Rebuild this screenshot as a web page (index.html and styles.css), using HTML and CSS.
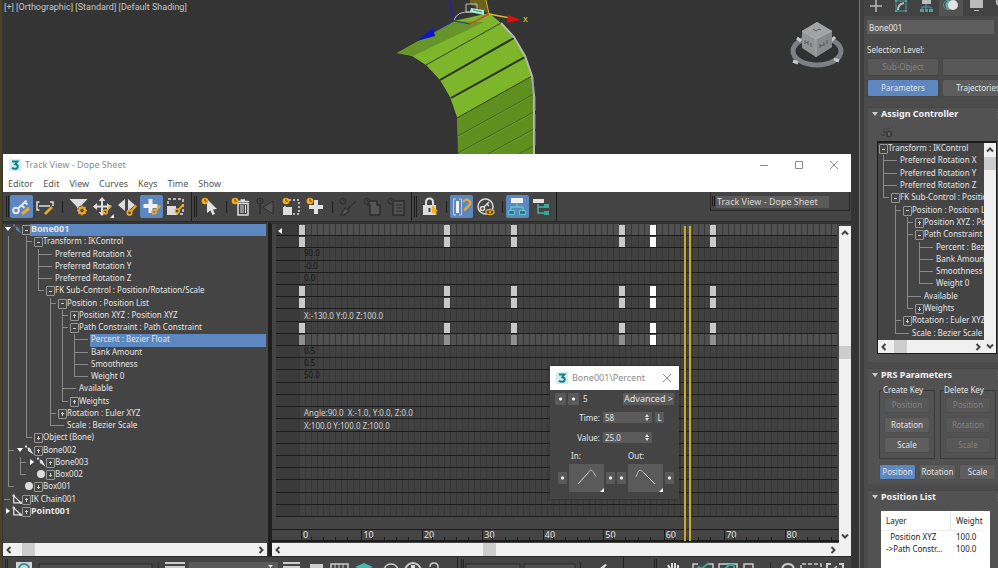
FILE: index.html
```html
<!DOCTYPE html>
<html lang="en">
<head>
<meta charset="utf-8">
<title>Track View - Dope Sheet</title>
<link rel="stylesheet" href="styles.css">
</head>
<body>
<svg class="defs" aria-hidden="true">
  <defs>
    <symbol id="logo" viewBox="0 0 12 12"><rect width="12" height="12" fill="#d5eef0"/><path d="M3 2.500h5.500L6.300 5.200c1.700 .2 2.500 1.100 2.500 2.200 0 1.500-1.300 2.400-3 2.400-1.200 0-2.200-.4-2.900-1" fill="none" stroke="#14808a" stroke-width="1.900"/></symbol>
    <symbol id="goldkey" viewBox="0 0 10 10"><path d="M9.300 .5 4.500 5.800" stroke="#f0a822" stroke-width="2"/><circle cx="3.200" cy="7" r="2" fill="none" stroke="#f0a822" stroke-width="1.600"/></symbol>
    <symbol id="clock" viewBox="0 0 8 8"><circle cx="4" cy="4" r="3.300" fill="#f5ae1d"/><path d="M4 1.500V4.300H6" stroke="#6a4a0c" fill="none"/></symbol>
    <symbol id="clockoff" viewBox="0 0 8 8"><circle cx="4" cy="4" r="3" fill="#444" stroke="#2c2c2c"/><path d="M4 2V4.200H6" stroke="#2c2c2c" fill="none"/></symbol>
    <symbol id="keys" viewBox="0 0 22 22"><circle cx="6" cy="14.500" r="2.800" fill="none" stroke="#e6e6e6" stroke-width="2"/><path d="M8 12.500 16.500 4.500M11.500 9l3 3M14.500 6l3 2.500" stroke="#e6e6e6" stroke-width="2"/><path d="M12 18l7-6" stroke="#f0a822" stroke-width="3"/></symbol>
    <symbol id="ranges" viewBox="0 0 22 22"><path d="M5.500 6H3v8h2.500M16 6h3v4M5 10h11" fill="none" stroke="#ddd" stroke-width="1.500"/><path d="M11 18l7-7" stroke="#f0a822" stroke-width="2.500"/></symbol>
    <symbol id="filter" viewBox="0 0 22 22"><path d="M1.500 3h18L12 11v7l-3-3v-4z" fill="#ddd"/><circle cx="14" cy="14.500" r="5" fill="#444"/><circle cx="14" cy="14.500" r="3" fill="none" stroke="#f0a822" stroke-width="2"/><path d="M14 9.500v10M9 14.500h10M10.500 11l7 7M17.500 11l-7 7" stroke="#f0a822" stroke-width="1.300"/><circle cx="14" cy="14.500" r="1.700" fill="#444"/></symbol>
    <symbol id="move" viewBox="0 0 22 22"><path d="M10 3v16M2 10.500h16" stroke="#ddd" stroke-width="2"/><path d="M10 1l3.500 4h-7zM10 20l3.500-4h-7zM1 10.500l4-3.500v7zM19 10.500l-4-3.500v7z" fill="#ddd"/><use href="#goldkey" x="10" y="9" width="10" height="10"/><path d="M22 18v4h-4z" fill="#fff"/></symbol>
    <symbol id="slide" viewBox="0 0 22 22"><path d="M9 3v12L2 9zM12 3v12l7-6z" fill="#ddd"/><use href="#goldkey" x="10" y="9" width="11" height="11"/></symbol>
    <symbol id="add" viewBox="0 0 22 22"><path d="M10.500 3v14M3.500 10h14" stroke="#f0f0f0" stroke-width="4"/><use href="#goldkey" x="11" y="9" width="10" height="10"/></symbol>
    <symbol id="scale" viewBox="0 0 22 22"><rect x="4" y="3" width="15" height="15" fill="none" stroke="#ddd" stroke-width="1.500" stroke-dasharray="3 2"/><path d="M3 10h9v9H3z" fill="#ddd"/><use href="#goldkey" x="10" y="8" width="10" height="10"/></symbol>
    <symbol id="select" viewBox="0 0 22 22"><path d="M8 3l10 10-4 .5 2 4.500-2.500 1-2-4.500L8 17z" fill="#e2e2e2"/><use href="#clock" x="2" y="1" width="8" height="8"/></symbol>
    <symbol id="trash" viewBox="0 0 22 22"><path d="M7 5.500h12M10.500 4h4.500" stroke="#ddd" stroke-width="1.500"/><path d="M8 7.500h10V19H8z" fill="none" stroke="#ddd" stroke-width="1.500"/><path d="M11 9v8M13 9v8M15.500 9v8" stroke="#ddd"/><use href="#clock" x="1" y="1" width="8" height="8"/></symbol>
    <symbol id="rev" viewBox="0 0 22 22"><path d="M5 5v13" stroke="#2c2c2c" stroke-width="1.500"/><path d="M18 5v13L8 11.500z" fill="#555" stroke="#2c2c2c"/><use href="#clockoff" x="1" y="1" width="8" height="8"/></symbol>
    <symbol id="scaletime" viewBox="0 0 22 22"><rect x="5" y="4" width="14" height="14" fill="none" stroke="#ddd" stroke-width="1.500" stroke-dasharray="2 2"/><path d="M3 11h9v8H3z" fill="#ddd"/><use href="#clock" x="2" y="1" width="8" height="8"/></symbol>
    <symbol id="addtime" viewBox="0 0 22 22"><path d="M11 4v14M4 11h14" stroke="#e2e2e2" stroke-width="4"/><use href="#clock" x="1" y="1" width="8" height="8"/></symbol>
    <symbol id="cut" viewBox="0 0 22 22"><path d="M20 5l-8 8M9 12l4 3-5 4H5z" fill="#5c5c5c" stroke="#303030" stroke-width="1.500"/><use href="#clockoff" x="3" y="1" width="8" height="8"/></symbol>
    <symbol id="copy" viewBox="0 0 22 22"><path d="M8 5h8v4h3v10H9V9H6" fill="#555" stroke="#2c2c2c" stroke-width="1.500"/><use href="#clockoff" x="2" y="1" width="8" height="8"/></symbol>
    <symbol id="paste" viewBox="0 0 22 22"><path d="M7 5h11v14H7z" fill="#505050" stroke="#2c2c2c" stroke-width="1.500"/><path d="M10 9h6M10 12h6M10 15h6" stroke="#2c2c2c"/><use href="#clockoff" x="1" y="1" width="8" height="8"/></symbol>
    <symbol id="lock" viewBox="0 0 22 22"><path d="M7 10V6q0-3.500 3.500-3.500T14 6v4" fill="none" stroke="#ddd" stroke-width="2"/><path d="M4 9h13v10H4z" fill="#ddd"/><path d="M9.500 12h2v4h-2z" fill="#444"/><path d="M13 9l6 6-2 .5 1 3-2 .5-1-3-2 2z" fill="#f5ae1d"/></symbol>
    <symbol id="snap" viewBox="0 0 22 22"><path d="M6 3H3.500v16H6M9 3h2.500v16H9" fill="none" stroke="#ccc"/><path d="M6 5h3v12H6z" fill="#f2f2f2"/><path d="M13 6q3-4 6-1.500t0 5l-5 5" fill="none" stroke="#dfa43a" stroke-width="2.500"/></symbol>
    <symbol id="keyview" viewBox="0 0 22 22"><circle cx="10.500" cy="10.500" r="7.500" fill="none" stroke="#ddd" stroke-width="1.500"/><circle cx="7.500" cy="12.500" r="2" fill="none" stroke="#ddd" stroke-width="1.500"/><path d="M9 11l5-5M12 8l2 2" stroke="#ddd" stroke-width="1.500"/><ellipse cx="15" cy="16" rx="4" ry="2.500" fill="#444" stroke="#f0a822" stroke-width="1.300"/><circle cx="15" cy="16" r="1.200" fill="#f0a822"/></symbol>
    <symbol id="hier" viewBox="0 0 22 22"><path d="M5 2h12v5H5z" fill="#f0f0f0"/><path d="M11 7v4M5 14v-3h12v3" stroke="#5cc8c8" fill="none" stroke-width="1.300"/><path d="M2.500 14.500h6v4h-6zM13.500 14.500h6v4h-6z" fill="#2f7788" stroke="#60c8c8"/></symbol>
    <symbol id="hier2" viewBox="0 0 22 22"><path d="M2 3h11v4H2z" fill="#e0e0e0"/><path d="M7 8v9h7M7 11h7" stroke="#40b0a0" fill="none" stroke-width="1.500"/><path d="M13 8h5v4h-5zM13 15h5v4h-5z" fill="#3ba695"/></symbol>
    <symbol id="bone" viewBox="0 0 10 10"><path d="M1 0.500h2v2H1z"/><path d="M3.500 2.500 6 3l3.500 6.500L4 6z"/></symbol>
    <symbol id="chain" viewBox="0 0 12 12"><path d="M2 2v8.500h8.500z" fill="none" stroke="#ddd" stroke-width="1.500"/><circle cx="2" cy="2" r="1.500" fill="#ddd"/><circle cx="10.500" cy="10.500" r="1.500" fill="#ddd"/></symbol>
  </defs>
</svg>
<div class="app">
  <main class="viewport">
    <p class="vp-label">[+] [Orthographic] [Standard] [Default Shading]</p>
    <svg class="scene" viewBox="0 0 857 154" preserveAspectRatio="xMidYMin meet" aria-hidden="true">
      <g transform="translate(-2 0)">
        <path d="M397 53 454 21 489 13 501 23 514 37 525 56 532 76 534 95V154H458V136L457 117 450 97 440 80 426 65 412 56z" fill="#7db52b"/>
        <path d="M397 53 454 21 484 22 413 56z" fill="#67952a"/>
        <path d="M457 118 532 76 534 95V154H458z" fill="#5f901f"/>
        <path d="M426 65 501 23M457 118 532 76" stroke="#33431f" stroke-width="1"/>
        <path d="M440 80 514 38M451 98 525 57" stroke="#263217" stroke-width="2"/>
        <path d="M458 136 534 94M458 153 534 112M488 154 534 129M518 154 534 146" stroke="#42651c"/>
        <path d="M458 137 534 95M460 153 534 113M490 154 534 130" stroke="#79a044" stroke-width="1" opacity=".6"/>
        <path d="M501 23 514 37 525 56 532 76 534 95V154" fill="none" stroke="#b6b9b2" stroke-width="2"/>
        <path d="M533 77v17M535 96v15M535 114v15M535 131v14" stroke="#8d8e94" stroke-width="1"/>
        <path d="M470 0h16l2 13-18-9z" fill="#6c611d"/>
        <path d="M486 0l3 14" stroke="#c9bc2e"/>
        <path d="M449 0l5 20" stroke="#2322a8" stroke-width="1.500"/>
        <path d="M454 21 470 24" stroke="#23358e"/><path d="M470 24 489 14" stroke="#c3502a" stroke-width="1.500"/>
        <path d="M454 20q3-9 17-8M466 12V4h11v8z" fill="none" stroke="#bfc3bd"/>
        <path d="M471 8l13 2v5l-14-3z" fill="#a9efd2"/>
        <path d="M473 10l9 2" stroke="#3c8d78"/>
        <path d="M454 21 434 32" stroke="#1c2da0"/><path d="M433 28 435 36 417 41z" fill="#0d16c8"/>
        <path d="M489 14 510 18" stroke="#d8bb2c" stroke-width="1.500"/><path d="M508 15l13 5-14 3z" fill="#d50f0a"/>
        <text x="523" y="22" class="axis">x</text>
        <ellipse cx="817" cy="51" rx="24" ry="14" fill="#2f3032" stroke="#7c7f84" stroke-width="5"/>
        <path d="M797 38l4 3M835 37l-4 4M793 61l5 2M839 61l-5-2" stroke="#c5c7ca" stroke-width="3"/>
        <path d="M817 22 832 31V47L816 57 802 48V31z" fill="#929395"/>
        <path d="M817 22 832 31 816 39 802 31z" fill="#a2a3a5"/>
        <path d="M832 31V47L816 57V39z" fill="#88898b"/>
        <path d="M802 31l14 8 16-8M816 39v18" fill="none" stroke="#b5b6b8" stroke-width=".7"/>
        <path d="M813 29l3 2 3-2 2 1M805 40v4M808 41v4M811 43v4M820 44v4M824 42v4M827 40v4M805 42l3 1M820 46l4-1" stroke="#5a5b5e" fill="none"/>
      </g>
    </svg>

    <section class="window" aria-label="Track View - Dope Sheet">
      <header class="titlebar">
        <svg class="logo"><use href="#logo"/></svg>
        <h1>Track View - Dope Sheet</h1>
        <button class="sys" aria-label="Minimize"><svg viewBox="0 0 10 10"><path d="M1 5.500h8"/></svg></button>
        <button class="sys" aria-label="Maximize"><svg viewBox="0 0 10 10"><path d="M1.500 1.500h7v7h-7z"/></svg></button>
        <button class="sys" aria-label="Close"><svg viewBox="0 0 10 10"><path d="M1 1l8 8M9 1l-8 8"/></svg></button>
      </header>
      <nav class="menubar">
        <button>Editor</button><button>Edit</button><button>View</button><button>Curves</button><button>Keys</button><button>Time</button><button>Show</button>
      </nav>
      <div class="toolbar">
        <div class="tools tight">
          <i class="grip"></i>
          <button class="tool on" aria-label="Edit Keys"><svg><use href="#keys"/></svg></button>
          <button class="tool" aria-label="Edit Ranges"><svg><use href="#ranges"/></svg></button>
          <i class="sep"></i>
          <button class="tool" aria-label="Filters"><svg><use href="#filter"/></svg></button>
          <button class="tool" aria-label="Move Keys"><svg><use href="#move"/></svg></button>
          <button class="tool" aria-label="Slide Keys"><svg><use href="#slide"/></svg></button>
          <button class="tool on" aria-label="Add Keys"><svg><use href="#add"/></svg></button>
          <button class="tool" aria-label="Scale Keys"><svg><use href="#scale"/></svg></button>
        </div>
        <div class="tools">
          <i class="grip"></i>
          <button class="tool" aria-label="Select Time"><svg><use href="#select"/></svg></button>
          <i class="sep"></i>
          <button class="tool" aria-label="Delete Time"><svg><use href="#trash"/></svg></button>
          <button class="tool" aria-label="Reverse Time" disabled><svg><use href="#rev"/></svg></button>
          <button class="tool" aria-label="Scale Time"><svg><use href="#scaletime"/></svg></button>
          <button class="tool" aria-label="Insert Time"><svg><use href="#addtime"/></svg></button>
          <i class="sep"></i>
          <button class="tool" aria-label="Cut Time" disabled><svg><use href="#cut"/></svg></button>
          <button class="tool" aria-label="Copy Time" disabled><svg><use href="#copy"/></svg></button>
          <button class="tool" aria-label="Paste Time" disabled><svg><use href="#paste"/></svg></button>
        </div>
        <div class="tools">
          <i class="grip"></i>
          <button class="tool" aria-label="Lock Selection"><svg><use href="#lock"/></svg></button>
          <i class="sep"></i>
          <button class="tool on" aria-label="Snap Frames"><svg><use href="#snap"/></svg></button>
          <button class="tool" aria-label="Show Keyable Icons"><svg><use href="#keyview"/></svg></button>
          <i class="sep"></i>
          <button class="tool on" aria-label="Modify Subtree"><svg><use href="#hier"/></svg></button>
          <button class="tool" aria-label="Modify Child Keys"><svg><use href="#hier2"/></svg></button>
        </div>
        <div class="namebox"><i class="grip"></i><input aria-label="Track view name" value="Track View - Dope Sheet"></div>
      </div>

      <div class="panes">
        <div class="tree-pane">
          <div class="tree" id="tree"></div>
          <div class="hscroll"><svg viewBox="0 0 6 8"><path d="M4.500 1 1.500 4l3 3"/></svg><i class="thumb"></i><svg viewBox="0 0 6 8"><path d="M1.500 1l3 3-3 3"/></svg></div>
        </div>
        <div class="dope-pane">
          <div class="dope-body">
            <div class="dope">
              <div class="tracks" id="tracks"></div>
              <div class="ruler" id="ruler"></div>
              <div class="playhead"><i></i></div>
            </div>
            <div class="vscroll"><svg viewBox="0 0 8 6"><path d="M1 4.500l3-3 3 3"/></svg><i class="thumb"></i><svg viewBox="0 0 8 6"><path d="M1 1.500l3 3 3-3"/></svg></div>
          </div>
          <div class="hscroll wide"><svg viewBox="0 0 6 8"><path d="M4.500 1 1.500 4l3 3"/></svg><i class="thumb"></i><svg viewBox="0 0 6 8"><path d="M1.500 1l3 3-3 3"/></svg></div>
        </div>
      </div>

      <div class="statusbar">
        <svg viewBox="0 0 848 12" preserveAspectRatio="xMinYMin slice" aria-hidden="true">
          <path d="M2.500 2v10M4.500 2v10M458.500 2v10M460.500 2v10M651.500 2v10M653.500 2v10" stroke="#222"/>
          <path d="M13 5h16v7H13z" fill="#d0d4d4"/><circle cx="21" cy="12" r="5" fill="none" stroke="#2b8f94" stroke-width="2"/>
          <path d="M36 7h113v5H36zM463 7h54v5h-54zM521 7h51v5h-51z" fill="#505050" stroke="#2a2a2a"/>
          <path d="M162 6h20M162 10h20M280 6h17M280 10h17" stroke="#ccc" stroke-width="2"/>
          <path d="M186 5h89v7h-89z" fill="#5a5a5a"/><path d="M265 8h5l-2.500 3z" fill="#ddd"/>
          <path d="M307 7h13v5h-13z" fill="#ccc"/><path d="M328 7h17v5h-17z" fill="none" stroke="#ccc" stroke-width="1.500"/><path d="M332 7v5M336 7v5M340 7v5" stroke="#ccc"/>
          <path d="M361 6l9 4-5 2h-8l-5-2z" fill="#4bb4b4"/>
          <path d="M381 12q2-5 7-5t7 5M427 10q0-4 4-4t4 4v2" fill="none" stroke="#ccc" stroke-width="1.500"/>
          <path d="M402 12q3-6 8-6t8 6" fill="none" stroke="#ccc" stroke-width="2"/><path d="M408 8h4v4h-4zM596 12l6-5 2 1-4 4z" fill="#ddd"/>
          <path d="M454.500 0v12M620.500 0v12" stroke="#222"/><path d="M155.500 5v7M577.500 5v7M767.500 5v7" stroke="#2a2a2a"/>
          <path d="M665 8l2 4M669 6v6M672 6v6M675 8v4" stroke="#ddd" stroke-width="2"/>
          <path d="M690 12V7h5M705 7h5v5M716 12V7h18v5M741 12V7h9v5" fill="none" stroke="#ccc" stroke-width="1.500"/><path d="M694 12l2-2 2 2 8-6M722 12l4-4h5v4" fill="none" stroke="#3ca59a" stroke-width="2"/>
          <path d="M779 12q1-5 6-5t6 5M824 12V7h4M836 7h4v5" fill="none" stroke="#ccc" stroke-width="2"/><path d="M798 12V7h20v5M831 12l3-3" fill="none" stroke="#ccc" stroke-width="1.500" stroke-dasharray="4 2"/>
        </svg>
      </div>
    </section>

    <section class="keyinfo" aria-label="Bone001\Percent">
      <header><svg class="logo"><use href="#logo"/></svg><h2>Bone001\Percent</h2><button class="sys" aria-label="Close"><svg viewBox="0 0 10 10"><path d="M1 1l8 8M9 1l-8 8"/></svg></button></header>
      <div class="ki-body">
        <div class="ki-row"><button class="dot" aria-label="Previous key"></button><button class="dot" aria-label="Next key"></button><output>5</output><button class="adv">Advanced &gt;</button></div>
        <div class="ki-form">
          <label for="ktime">Time:</label><span class="spin"><input id="ktime" value="58"><i></i></span><button class="mini">L</button>
          <label for="kval">Value:</label><span class="spin"><input id="kval" value="25.0"><i></i></span>
        </div>
        <div class="ki-tan"><span>In:</span><span>Out:</span></div>
        <div class="ki-curves">
          <button class="dot" aria-label="Previous in tangent"></button>
          <button class="curve" aria-label="In tangent"><svg viewBox="0 0 35 28"><path d="M9 20 19 9"/><path d="M19 9q3-5 5-1.500l3 5" opacity=".7"/><path class="corner" d="M35 24v4h-4z"/></svg></button>
          <button class="dot" aria-label="Next in tangent"></button>
          <button class="dot" aria-label="Previous out tangent"></button>
          <button class="curve" aria-label="Out tangent"><svg viewBox="0 0 35 28"><path d="M16 9 27 20"/><path d="M8 13l2-5q2-4 6 1" opacity=".7"/><path class="corner" d="M35 24v4h-4z"/></svg></button>
          <button class="dot" aria-label="Next out tangent"></button>
        </div>
      </div>
    </section>
  </main>

  <aside class="command">
    <div class="cmd">
      <div class="tabs">
        <button aria-label="Create"><svg viewBox="0 0 16 14"><path d="M8 0v12M2 6h12" stroke="#bbb" stroke-width="1.500"/></svg></button>
        <button aria-label="Modify"><svg viewBox="0 0 16 14"><path d="M3 1h10v10H3z" fill="none" stroke="#4d9d9c"/><path d="M5 10q0-6 6-7" fill="none" stroke="#bbb" stroke-width="2"/><path d="M2 0h2v2H2zM12 0h2v2h-2zM2 10h2v2H2zM12 10h2v2h-2z" fill="#4d9d9c"/></svg></button>
        <button aria-label="Hierarchy"><svg viewBox="0 0 16 14"><path d="M4 0h9v4H4z" fill="#bbb"/><path d="M8 4v7M4 9V7h9v2" fill="none" stroke="#4d9d9c"/><path d="M2 9h4v3H2zM7 9h3v3H7zM11 9h4v3h-4z" fill="#4d9d9c"/></svg></button>
        <button class="cur" aria-label="Motion"><svg viewBox="0 0 16 14"><circle cx="5" cy="5" r="4.500" fill="none" stroke="#4d9d9c"/><circle cx="7" cy="5" r="4.500" fill="#68aaa8"/><circle cx="10" cy="5" r="5" fill="#e3e3e3"/></svg></button>
        <button aria-label="Display"><svg viewBox="0 0 16 14"><path d="M2 0h13v8H2zM6 10h5v1H6z" fill="#bbb"/></svg></button>
        <button aria-label="Utilities"><svg viewBox="0 0 16 14"><path d="M4 0q-1 5 3 5l6 7" fill="none" stroke="#bbb" stroke-width="2"/></svg></button>
      </div>
      <input class="objname" aria-label="Object name" value="Bone001">
      <p class="sel-label">Selection Level:</p>
      <div class="pair"><button class="btn" disabled>Sub-Object</button><button class="btn" aria-label="Sub-object level" disabled></button></div>
      <div class="pair"><button class="btn blue">Parameters</button><button class="btn">Trajectories</button></div>

      <section class="rollout">
        <h3>Assign Controller</h3>
        <svg class="assign" viewBox="0 0 14 14" aria-hidden="true"><path d="M1 10h4M3 7h3" stroke="#333"/><circle cx="9" cy="9" r="3.500" fill="#3b3b3b"/><path d="M8 9h2M9 7v4" stroke="#777"/><path d="M3 4h7l3-3" fill="none" stroke="#444"/></svg>
        <div class="ctrl-box">
          <div class="ctrl-main"><div class="tree" id="ctrl"></div>
            <div class="hscroll"><svg viewBox="0 0 6 8"><path d="M4.500 1 1.500 4l3 3"/></svg><i class="thumb"></i><svg viewBox="0 0 6 8"><path d="M1.500 1l3 3-3 3"/></svg></div></div>
          <div class="vscroll"><svg viewBox="0 0 8 6"><path d="M1 4.500l3-3 3 3"/></svg><i class="thumb"></i><svg viewBox="0 0 8 6"><path d="M1 1.500l3 3 3-3"/></svg></div>
        </div>
      </section>

      <section class="rollout">
        <h3>PRS Parameters</h3>
        <div class="groups">
          <fieldset><legend>Create Key</legend><button class="btn" disabled>Position</button><button class="btn">Rotation</button><button class="btn">Scale</button></fieldset>
          <fieldset><legend>Delete Key</legend><button class="btn" disabled>Position</button><button class="btn" disabled>Rotation</button><button class="btn" disabled>Scale</button></fieldset>
        </div>
        <div class="prs"><button class="btn blue">Position</button><button class="btn">Rotation</button><button class="btn">Scale</button></div>
      </section>

      <section class="rollout last">
        <h3>Position List</h3>
        <table class="layers">
          <thead><tr><th>Layer</th><th>Weight</th></tr></thead>
          <tbody><tr><td>&nbsp; Position XYZ</td><td>100.0</td></tr><tr><td>-&gt;Path Constr...</td><td>100.0</td></tr></tbody>
        </table>
      </section>
    </div>
  </aside>
</div>
<script src="app.js"></script>
</body>
</html>
```
FILE: styles.css
```css
* { box-sizing: border-box; }
html, body { height: 100%; margin: 0; }
body { background: #343434; color: #e4e4e4; font: 8px/12px "Noto Sans", "Open Sans", sans-serif; overflow: hidden; }
button, input { font: inherit; color: inherit; border: 0; margin: 0; padding: 0; background: none; }
h1, h2, h3, p { margin: 0; font-size: inherit; font-weight: 400; }
svg { display: block; }
i { display: block; }
.defs { position: absolute; width: 0; height: 0; }

.app { display: flex; height: 100%; min-height: 568px; }

/* Viewport */
.viewport { position: relative; flex: 1; min-width: 0; display: flex; flex-direction: column; border-left: 2px solid #4b421f; border-right: 1px solid #8e7518; }
.vp-label { position: absolute; left: 2px; top: 1px; font: 9px/12px Roboto, sans-serif; color: #c4c4c4; }
.scene { width: 100%; height: 154px; flex: none; }
.axis { font: 9px "Noto Sans", sans-serif; fill: #e8d32c; }

/* Track view window */
.window { flex: 1; min-height: 0; display: flex; flex-direction: column; margin: 0 8px 0 1px; background: #444; }
.titlebar { display: flex; align-items: center; height: 22px; padding-left: 6px; background: #fff; }
.logo { width: 12px; height: 12px; flex: none; }
.titlebar h1, .keyinfo h2 { flex: 1; padding-left: 4px; font-size: 9px; color: #8b8b8b; }
.sys { width: 35px; height: 20px; display: grid; place-items: center; }
.sys svg { width: 10px; height: 10px; fill: none; stroke: #8a8a8a; }
.menubar { display: flex; gap: 10px; height: 16px; padding-left: 5px; background: #fff; color: #555; font-size: 9px; }
.toolbar { display: flex; height: 30px; padding-left: 1px; border-bottom: 1px solid #2a2a2a; }
.tools { display: flex; align-items: center; gap: 2px; padding: 0 2px 0 2px; border-right: 1px solid #1d1d1d; }
.tools.tight { gap: 1px; padding-right: 4px; }
.grip { width: 3px; align-self: stretch; margin: 4px 0; border: solid #1d1d1d; border-width: 0 1px; }
.sep { width: 4px; height: 12px; background: linear-gradient(#1d1d1d, #1d1d1d) center / 1px 100% no-repeat; }
.tight .sep { width: 9px; }
.tool { width: 23px; height: 23px; border-radius: 2px; }
.tool svg { width: 22px; height: 22px; }
.tool.on { background: #5d87c0; }
.namebox { display: flex; align-items: flex-start; align-self: flex-start; height: 19px; width: 140px; margin-left: auto; margin-right: 1px; padding-left: 1px; border: 1px solid #262626; border-top: 0; }
.namebox input { width: 113px; height: 12px; margin: 4px 0 0 1px; padding: 0 1px; background: #5a5a5a; font-size: 9px; color: #d8d8d8; }

.panes { flex: 1; min-height: 0; display: flex; }
.tree-pane { width: 264px; display: flex; flex-direction: column; border-top: 2px solid #333; }
.tree { display: grid; grid-auto-rows: 1fr; line-height: 10px; }
.tree-pane .tree { flex: 1; margin-left: -1px; padding: 0 1px 25px 0; }
.node { display: flex; min-width: 0; white-space: nowrap; }
.cell { flex: none; width: 12px; position: relative; }
.cell.half { width: 6px; }
.cell.box, .cell.leaf { width: 10px; }
.cell.v, .cell.t { background: linear-gradient(#8a8a8a, #8a8a8a) 6px 0 / 1px 100% no-repeat; }
.cell.l { background: linear-gradient(#8a8a8a, #8a8a8a) 6px 0 / 1px 6px no-repeat; }
.cell.t::after, .cell.l::after { content: ""; display: block; margin: 5px 0 0 6px; height: 1px; background: #8a8a8a; }
.cell.leaf::after { content: ""; display: block; margin: 5px 2px 0 0; height: 1px; background: #8a8a8a; }
.cell.stub::after { content: ""; display: block; margin: 5px 4px 0 2px; height: 1px; background: #8a8a8a; }
.cell.box::before { content: ""; display: block; width: 7px; height: 8px; margin: 1px 0 0 2px; border: 1px solid #969696; border-radius: 1px; background: linear-gradient(#ccc, #ccc) center / 3px 1px no-repeat; }
.cell.plus::before { background: linear-gradient(#ccc, #ccc) center / 3px 1px no-repeat, linear-gradient(#ccc, #ccc) center / 1px 4px no-repeat; }
.cell.icon { width: 6px; height: 10px; display: flex; justify-content: center; align-items: center; }
.cell.icon svg { flex: none; width: 10px; height: 10px; fill: #ddd; }
.cell.down, .cell.right { display: grid; place-items: center; height: 10px; }
.cell.down::before { content: ""; border: solid transparent; border-width: 4px 3px 0; border-top-color: #fff; }
.cell.right::before { content: ""; border: solid transparent; border-width: 3px 0 3px 4px; border-left-color: #fff; }
.node .name { flex: 1; padding-left: 1px; }
.node.selected .name { background: #5d87c0; }
.node.strong .name { font-weight: 700; font-size: 9px; }
.node.selected .icon svg { fill: #5d7ba8; }

.hscroll { display: flex; align-items: center; height: 13px; flex: none; padding: 0 3px; background: #f0f0f0; }
.hscroll svg { width: 6px; height: 8px; }
.hscroll svg, .vscroll svg { fill: none; stroke: #444; stroke-width: 2; flex: none; }
.hscroll .thumb { width: 13px; height: 13px; margin: 0 auto 0 10px; background: #cdcdcd; }
.hscroll.wide { padding-right: 15px; }
.hscroll.wide .thumb { margin-left: 36%; }
.vscroll { display: flex; flex-direction: column; align-items: center; width: 12px; flex: none; padding: 4px 0; background: #f0f0f0; }
.vscroll svg { width: 8px; height: 6px; }
.vscroll .thumb { width: 12px; height: 13px; margin: 0 0 auto; background: #cdcdcd; }

.dope-pane { flex: 1; min-width: 0; display: flex; flex-direction: column; margin-left: 1px; border-left: 4px solid #1e1e1e; border-top: 2px solid #333; }
.dope-body { flex: 1; min-height: 0; display: flex; }
.dope-body .vscroll { margin-top: 2px; }
.dope-body .vscroll .thumb { margin-top: 110px; }
.dope { position: relative; flex: 1; min-width: 0; display: flex; flex-direction: column; padding: 0 2px 0 4px; }
.tracks { flex: 1; display: grid; grid-auto-rows: 1fr; }
.track, .ruler, .playhead { display: grid; grid-template-columns: 23px repeat(89, minmax(0, 1fr)); }
.track { position: relative; background: #3a3a3a; border-bottom: 1px solid #1c1c1c; }
.frames { grid-area: 1 / 2 / 2 / -1; background: repeating-linear-gradient(90deg, #373737 0, #373737 1px, transparent 1px, transparent calc(100% / 89)) #414141; }
.lit .frames { background-color: #505050; }
.key { grid-row: 1; margin: 1px 0 0; background: #c9c9c9; z-index: 1; }
.key.active { background: #fff; }
.dim .key { background: #909090; }
.dim .key.active { background: #fff; }
.value { grid-area: 1 / 2 / 2 / -1; padding-left: 5px; color: #151515; white-space: pre; line-height: 10px; z-index: 1; }
.value.light { align-self: end; color: #d0d0d0; }
.track:first-child::before { content: ""; position: absolute; left: 2px; top: 4px; border: solid transparent; border-width: 3px 4px 3px 0; border-right-color: #fff; }
.ruler { height: 13px; flex: none; margin: 12px -2px 1px -4px; padding: 0 2px 0 4px; border: solid #1c1c1c; border-width: 1px 0 2px; background: #444; }
.tick { grid-row: 1; height: 3px; align-self: end; border-left: 1px solid #1c1c1c; }
.tick.ten { grid-column-end: span 4; height: 100%; margin-left: 2px; padding-left: 1px; font-size: 9px; line-height: 10px; }
.playhead { position: absolute; inset: 2px 2px 2px 4px; pointer-events: none; }
.playhead i { grid-column: 66; margin: 0 1px 0 -2px; border: solid #c8ab2c; border-width: 0 2px; }
.statusbar { flex: none; height: 12px; overflow: hidden; border-top: 1px solid #2a2a2a; background: #444; }
.statusbar svg { width: 100%; height: 12px; }

/* Key info dialog */
.keyinfo { position: absolute; left: 548px; top: 366px; width: 129px; background: #444; box-shadow: 0 0 2px #222; }
.keyinfo header { display: flex; align-items: center; height: 24px; padding-left: 6px; background: #fff; }
.keyinfo .sys { width: 24px; }
.ki-body { padding: 3px 5px 7px; }
.ki-row { display: flex; align-items: center; gap: 2px; }
.ki-row output { margin: 0 auto 0 2px; }
.dot { width: 11px; height: 12px; border-radius: 1px; background: radial-gradient(circle, #fff 1px, transparent 2px) #5a5a5a; }
.adv { width: 51px; height: 12px; background: #5a5a5a; font-size: 9px; line-height: 12px; }
.ki-form { display: grid; grid-template-columns: 45px 49px 9px; column-gap: 3px; row-gap: 8px; margin-top: 7px; }
.ki-form label { text-align: right; }
.spin { display: flex; align-items: center; height: 11px; padding: 0 3px 0 2px; background: #5a5a5a; }
.spin input { width: 100%; min-width: 0; height: 11px; }
.spin i::before { content: ""; display: block; border: solid transparent; border-width: 0 2px 3px; border-bottom-color: #ddd; }
.spin i::after { content: ""; display: block; margin-top: 1px; border: solid transparent; border-width: 3px 2px 0; border-top-color: #ddd; }
.mini { height: 11px; line-height: 11px; background: #5a5a5a; }
.ki-tan { display: grid; grid-template-columns: 57px 1fr; margin-top: 6px; padding-left: 16px; }
.ki-curves { display: flex; align-items: center; gap: 2px; margin-top: 2px; padding-left: 3px; }
.ki-curves .dot { width: 9px; flex: none; }
.curve { width: 35px; height: 28px; flex: none; background: #5a5a5a; border-radius: 1px; }
.curve svg { width: 35px; height: 28px; fill: none; stroke: #ddd; }
.curve .corner { fill: #fff; stroke: none; }

/* Command panel */
.command { width: 138px; flex: none; overflow: hidden; background: #444; border-left: 4px solid #3e3e3e; }
.cmd { width: 156px; height: 100%; padding-left: 3px; display: flex; flex-direction: column; background: #4b4b4b; }
.tabs { display: flex; gap: 1px; height: 16px; flex: none; margin-left: -3px; background: #424242; }
.tabs button { width: 24px; display: flex; justify-content: center; }
.tabs svg { width: 16px; height: 14px; }
.tabs .cur { background: #525252; }
.objname { width: 127px; height: 14px; margin: 4px 0 10px; padding: 0 2px; background: #5e5e5e; flex: none; }
.sel-label { flex: none; margin-bottom: 3px; }
.pair { display: grid; grid-template-columns: 70px 70px; gap: 5px; margin: 0 0 5px 1px; flex: none; }
.btn { background: #5e5e5e; border-radius: 1px; box-shadow: 0 0 1px #333; line-height: 12px; }
.btn:disabled { background: #575757; color: #828282; }
.btn.blue { background: #5d87c0; }
.pair .btn { height: 16px; }
.rollout { margin: 6px 0 0 1px; padding-bottom: 8px; background: #525252; flex: none; border-top: 1px solid #474747; }
.rollout h3 { padding-left: 13px; font-weight: 700; font-size: 9px; color: #f2f2f2; position: relative; }
.rollout h3::before { content: ""; position: absolute; left: 4px; top: 4px; border: solid transparent; border-width: 4px 3px 0; border-top-color: #ccc; }
.rollout h3::after { content: ""; position: absolute; left: 128px; top: 2px; width: 4px; height: 8px; background: radial-gradient(#777 1px, transparent 1px) 0 0 / 3px 3px; }
.assign { width: 14px; height: 14px; margin: 5px 0 2px 12px; }
.ctrl-box { display: flex; width: 120px; margin-left: 9px; border: solid #1c1c1c; border-width: 2px 1px 1px; background: #444; }
.ctrl-main { flex: 1; min-width: 0; overflow: hidden; }
.ctrl-main .tree { min-height: 197px; overflow: hidden; margin-left: -1px; }
.ctrl-main .name { overflow: hidden; }
.ctrl-box .vscroll .thumb { margin-top: 4px; }
.ctrl-box .hscroll .thumb { margin-left: 7px; }
.groups { display: flex; gap: 5px; margin-left: 11px; }
fieldset { width: 56px; margin: 3px 0 0; padding: 2px 5px 6px; border: 1px solid #393939; display: grid; gap: 6px; }
legend { padding: 0; margin-left: -2px; line-height: 12px; }
fieldset .btn, .prs .btn { height: 14px; }
.prs { display: grid; grid-template-columns: repeat(3, 35px); gap: 5px; margin: 6px 0 -3px 12px; }
.rollout.last { flex: 1; display: flex; flex-direction: column; padding: 0; }
.layers { width: 109px; margin: 8px 0 0 13px; flex: 1; border-spacing: 0; background: #fff; color: #222; table-layout: fixed; display: block; }
.layers th { font-weight: 400; text-align: left; height: 20px; border-bottom: 1px solid #f0f0f0; }
.layers th, .layers td { padding: 0 0 0 5px; white-space: nowrap; }
.layers td { height: 12px; line-height: 12px; }
.layers th:first-child, .layers td:first-child { width: 70px; }
.layers th:first-child { border-right: 1px solid #e2e2e2; }
```
FILE: app.js
```js
// Guide codes, left to right: v t l = line pieces, _ = blank, . = half blank,
// h = leaf dash, s = short stub, + - = expander, d r = disclosure arrows,
// b c k = object icons.
const shapes = {
  v: 'cell v', t: 'cell t', l: 'cell l', _: 'cell', '.': 'cell half', h: 'cell leaf', s: 'cell stub',
  '+': 'cell box plus', '-': 'cell box', d: 'cell down', r: 'cell right',
  b: 'cell icon', c: 'cell icon', k: 'cell icon'
};
const icons = {
  b: '<svg><use href="#bone"/></svg>',
  c: '<svg viewBox="0 0 10 10"><circle cx="5" cy="5" r="4"/></svg>',
  k: '<svg><use href="#chain"/></svg>'
};
function fill(id, rows) {
  document.getElementById(id).innerHTML = rows.map(([code, name, cls = '']) =>
    `<div class="node ${cls}">${[...code].map(c => `<span class="${shapes[c]}">${icons[c] || ''}</span>`).join('')}<span class="name">${name}</span></div>`
  ).join('');
}
fill('tree', [
  ['db-', 'Bone001', 'selected strong'],
  ['v.t-', 'Transform : IKControl'],
  ['v.vth', 'Preferred Rotation X'],
  ['v.vth', 'Preferred Rotation Y'],
  ['v.vth', 'Preferred Rotation Z'],
  ['v.vl-', 'FK Sub-Control : Position/Rotation/Scale'],
  ['v.v_t-', 'Position : Position List'],
  ['v.v_vt+', 'Position XYZ : Position XYZ'],
  ['v.v_vt-', 'Path Constraint : Path Constraint'],
  ['v.v_vvth', 'Percent : Bezier Float', 'selected'],
  ['v.v_vvth', 'Bank Amount'],
  ['v.v_vvth', 'Smoothness'],
  ['v.v_vvlh', 'Weight 0'],
  ['v.v_vth', 'Available'],
  ['v.v_vl+', 'Weights'],
  ['v.v_t+', 'Rotation : Euler XYZ'],
  ['v.v_lh', 'Scale : Bezier Scale'],
  ['v.l+', 'Object (Bone)'],
  ['tdb+', 'Bone002'],
  ['vtrb+', 'Bone003'],
  ['vl_c+', 'Box002'],
  ['l_c+', 'Box001'],
  ['sk+', 'IK Chain001'],
  ['rk+', 'Point001', 'strong']
]);
fill('ctrl', [
  ['-', 'Transform : IKControl'],
  ['th', 'Preferred Rotation X'],
  ['th', 'Preferred Rotation Y'],
  ['th', 'Preferred Rotation Z'],
  ['l-', 'FK Sub-Control : Position/Rotation/Scale'],
  ['_t-', 'Position : Position List'],
  ['_vt+', 'Position XYZ : Position XYZ'],
  ['_vt-', 'Path Constraint : Path Constraint'],
  ['_vvth', 'Percent : Bezier Float'],
  ['_vvth', 'Bank Amount'],
  ['_vvth', 'Smoothness'],
  ['_vvlh', 'Weight 0'],
  ['_vth', 'Available'],
  ['_vl+', 'Weights'],
  ['_t+', 'Rotation : Euler XYZ'],
  ['_lh', 'Scale : Bezier Scale']
]);

const keys = [0, 24, 35, 53, 58, 68];
const keyed = { 0: 'lit', 1: '', 5: '', 6: '', 8: '', 9: 'lit dim' };
const values = {
  2: '90.0', 3: '-0.0', 4: '0.0', 7: 'X:-130.0 Y:0.0 Z:100.0', 10: '0.5', 11: '0.5', 12: '50.0',
  15: 'Angle:90.0  X:-1.0, Y:0.0, Z:0.0', 16: 'X:100.0 Y:100.0 Z:100.0'
};
let out = '';
for (let row = 0; row < 24; row++) {
  out += `<div class="track ${keyed[row] || ''}"><span class="frames"></span>`;
  if (row in keyed) out += keys.map(f => `<span class="key${f === 58 ? ' active' : ''}" style="grid-column:${f + 2}"></span>`).join('');
  if (row in values) out += `<span class="value${values[row].includes(':') ? ' light' : ''}">${values[row]}</span>`;
  out += '</div>';
}
document.getElementById('tracks').innerHTML = out;

let ticks = '';
for (let f = 0; f < 89; f += 1) {
  if (f % 10 === 0) ticks += `<span class="tick ten" style="grid-column-start:${f + 2}">${f}</span>`;
  else if (f % 2 === 0) ticks += `<span class="tick" style="grid-column:${f + 2}"></span>`;
}
document.getElementById('ruler').innerHTML = ticks;
```
